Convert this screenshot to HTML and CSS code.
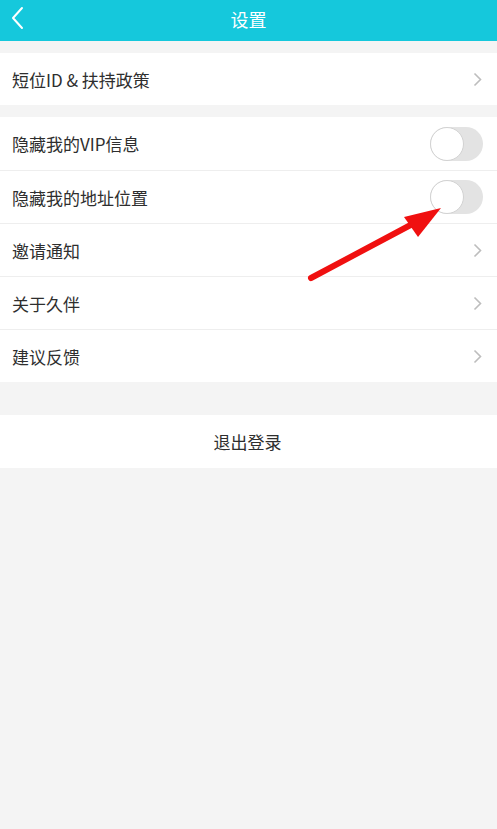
FILE: index.html
```html
<!DOCTYPE html>
<html lang="zh-CN">
<head>
    <meta charset="UTF-8">
    <meta name="viewport" content="width=device-width, initial-scale=1.0">
    <title>设置</title>
    <link rel="stylesheet" href="styles.css">
</head>
<body>
    <header class="topbar">
        <svg class="back" width="14" height="24" viewBox="0 0 14 24">
            <path d="M11 2 L2 12 L11 22" fill="none" stroke="#fff" stroke-width="2" stroke-linecap="round" stroke-linejoin="round"/>
        </svg>
        <h1>设置</h1>
    </header>

    <section class="group first">
        <div class="row">
            <span>短位ID &amp; 扶持政策</span>
            <svg class="chev" width="9" height="15" viewBox="0 0 9 15"><path d="M1.5 1.5 L7.5 7.5 L1.5 13.5" fill="none" stroke="#bdbdbd" stroke-width="1.6"/></svg>
        </div>
    </section>

    <section class="group">
        <div class="row">
            <span>隐藏我的VIP信息</span>
            <div class="switch"><i></i></div>
        </div>
        <div class="row">
            <span>隐藏我的地址位置</span>
            <div class="switch"><i></i></div>
        </div>
        <div class="row">
            <span>邀请通知</span>
            <svg class="chev" width="9" height="15" viewBox="0 0 9 15"><path d="M1.5 1.5 L7.5 7.5 L1.5 13.5" fill="none" stroke="#bdbdbd" stroke-width="1.6"/></svg>
        </div>
        <div class="row">
            <span>关于久伴</span>
            <svg class="chev" width="9" height="15" viewBox="0 0 9 15"><path d="M1.5 1.5 L7.5 7.5 L1.5 13.5" fill="none" stroke="#bdbdbd" stroke-width="1.6"/></svg>
        </div>
        <div class="row">
            <span>建议反馈</span>
            <svg class="chev" width="9" height="15" viewBox="0 0 9 15"><path d="M1.5 1.5 L7.5 7.5 L1.5 13.5" fill="none" stroke="#bdbdbd" stroke-width="1.6"/></svg>
        </div>
    </section>

    <section class="group logout">
        <div class="row center">退出登录</div>
    </section>

    <svg class="arrow" width="497" height="829" viewBox="0 0 497 829">
        <line x1="311" y1="278" x2="420" y2="220" stroke="#f01010" stroke-width="6" stroke-linecap="round"/>
        <polygon points="441,208 404,217 418,237" fill="#f01010"/>
    </svg>
</body>
</html>
```

FILE: styles.css
```css
body { margin: 0; background: #f4f4f4; font-family: "Noto Sans CJK SC", "Noto Sans", sans-serif; color: #2e2e2e; width: 497px; min-height: 829px; position: relative; }
.topbar { height: 41px; background: #15c8dc; display: flex; align-items: center; justify-content: center; position: relative; }
.topbar h1 { margin: 0 0 4px; font-size: 18px; font-weight: normal; color: #fff; }
.topbar .back { position: absolute; left: 11px; top: 6px; }
.group { background: #fff; margin-top: 12px; }
.group.logout { margin-top: 33px; }
.row { height: 53px; display: flex; align-items: center; justify-content: space-between; padding: 0 14px 0 12px; font-size: 17px; border-top: 1px solid #eeeeee; box-sizing: border-box; }
.row:first-child { border-top: none; }
.group.first .row { height: 52px; }
.row.center { justify-content: center; }
.chev { margin-right: 1px; }
.switch { width: 53px; height: 34px; border-radius: 17px; background: #e3e3e3; position: relative; }
.switch i { position: absolute; left: 0; top: 0; width: 32px; height: 32px; border-radius: 50%; background: #fff; border: 1px solid #d2d2d2; }
.arrow { position: absolute; left: 0; top: 0; pointer-events: none; }
```
